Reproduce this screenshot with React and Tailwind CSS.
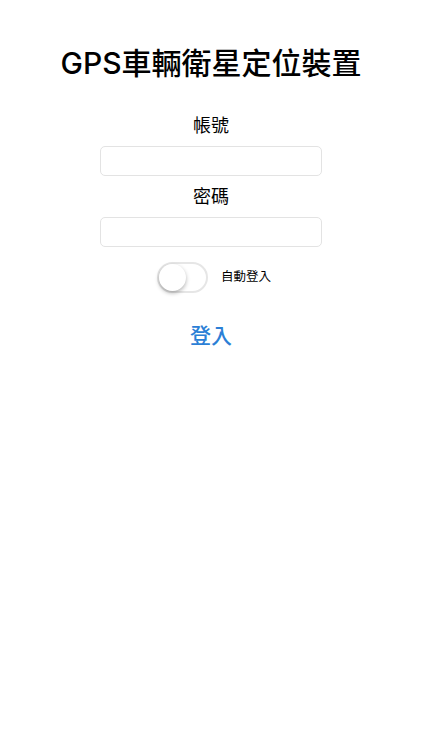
import { useState } from 'react'

const FONT = { fontFamily: '"Liberation Sans", "Noto Sans CJK TC", sans-serif' }
const TITLE_FONT = { fontFamily: 'Inter, "Noto Sans CJK TC", sans-serif' }

function Field({ label, type = 'text' }) {
  return (
    <div className="flex flex-col items-center">
      <span className="text-[18px] leading-[22px] text-black">{label}</span>
      <input
        type={type}
        className="mt-[9px] h-[30px] w-[222px] rounded-[5px] border border-[#e3e3e3] bg-white px-2 text-sm outline-none"
      />
    </div>
  )
}

export default function App() {
  const [auto, setAuto] = useState(false)

  return (
    <div className="min-h-[750px] w-full bg-white" style={FONT}>
      <div className="flex flex-col items-center pt-[44px]">
        <h1 className="text-[30px] font-medium leading-[38px] text-black" style={TITLE_FONT}>
          GPS車輛衛星定位裝置
        </h1>

        <div className="mt-[33px] flex flex-col items-center gap-[10px]">
          <Field label="帳號" />
          <Field label="密碼" type="password" />
        </div>

        <div className="ml-[6px] mt-[15px] flex items-center gap-[13px]">
          <button
            type="button"
            onClick={() => setAuto(!auto)}
            className={`relative h-[31px] w-[51px] rounded-full border-2 ${
              auto ? 'border-[#4cd964] bg-[#4cd964]' : 'border-[#e6e6e6] bg-white'
            }`}
          >
            <span
              className={`absolute top-[0px] size-[27px] rounded-full bg-white shadow-[0_2px_4px_rgba(0,0,0,0.3)] ${
                auto ? 'left-[20px]' : 'left-[0px]'
              }`}
            />
          </button>
          <span className="text-[12.5px] text-black">自動登入</span>
        </div>

        <button type="button" className="mt-[29px] text-[21px] font-medium leading-[28px] text-[#2b7fd6]">
          登入
        </button>
      </div>
    </div>
  )
}
